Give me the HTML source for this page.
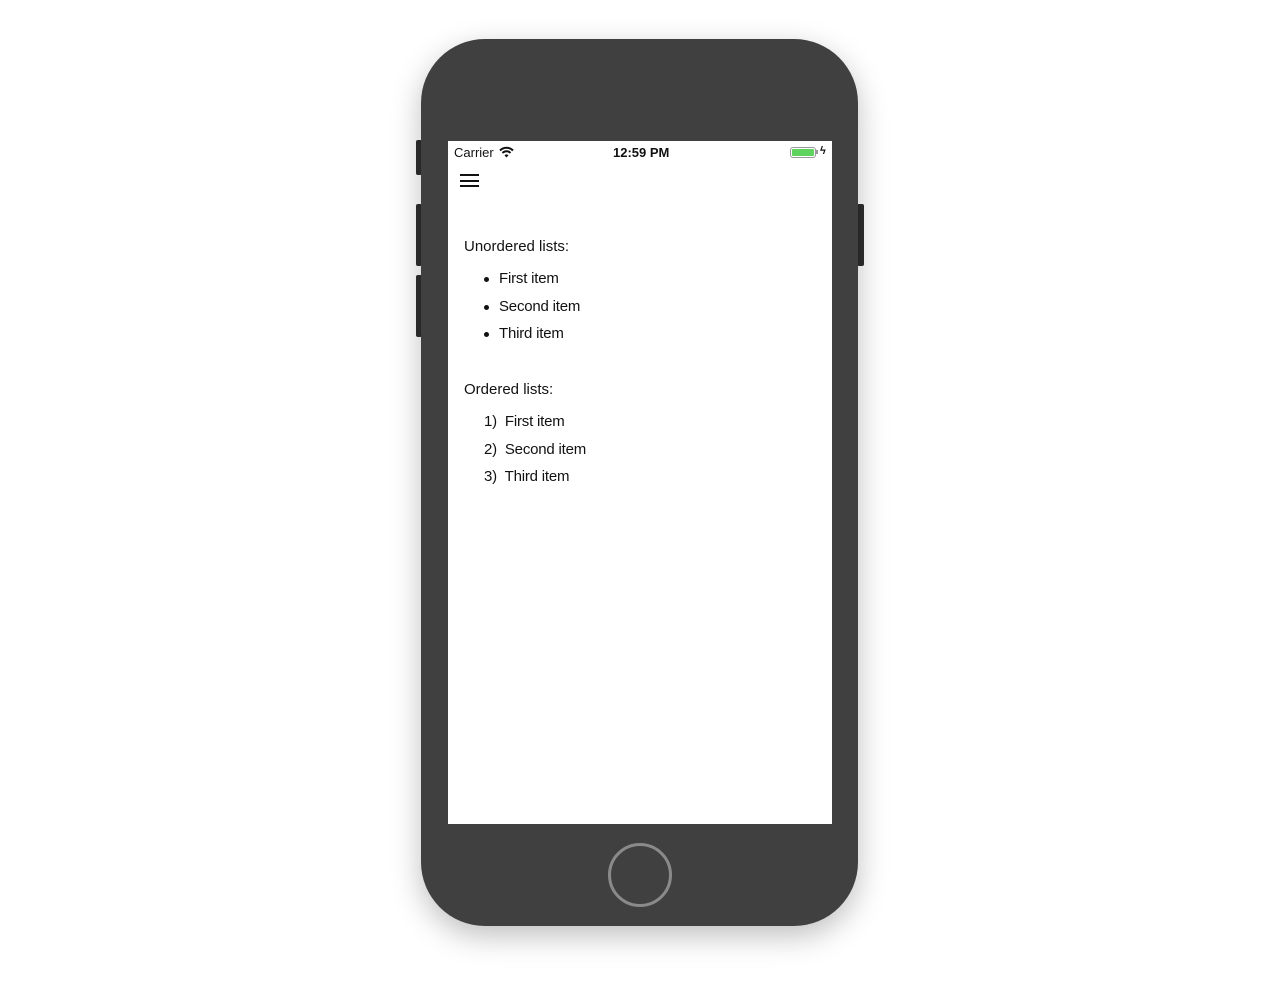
<!DOCTYPE html>
<html><head><style>
body{margin:0;width:1280px;height:984px;background:#fff;position:relative;font-family:"Liberation Sans",sans-serif;overflow:hidden}
.phone{position:absolute;left:421px;top:39px;width:437px;height:887px;background:#404040;border-radius:64px;box-shadow:0 10px 30px rgba(0,0,0,0.25)}
.btn{position:absolute;background:#2e2e2e;border-radius:2px}
.screen{position:absolute;left:448px;top:141px;width:384px;height:683px;background:#fff}
.t{position:absolute;font-size:15px;color:#111;white-space:nowrap}
.home{position:absolute;left:608px;top:843px;width:58px;height:58px;border:3px solid #8a8a8a;border-radius:50%}
.bar{position:absolute;left:12px;width:19px;height:2.4px;background:#111}
.d{position:absolute;left:36px;width:5px;height:5px;border-radius:50%;background:#111}
</style></head><body>
<div class="btn" style="left:416px;top:140px;width:6px;height:35px"></div>
<div class="btn" style="left:416px;top:204px;width:6px;height:62px"></div>
<div class="btn" style="left:416px;top:275px;width:6px;height:62px"></div>
<div class="btn" style="left:857px;top:204px;width:7px;height:62px"></div>
<div class="phone"></div>
<div class="screen">
<div class="t" style="left:6px;top:4px;font-size:13px">Carrier</div>
<svg style="position:absolute;left:51px;top:5px" width="15" height="12" viewBox="0 0 15 12"><path d="M1 4.5a9 9 0 0 1 13 0" stroke="#111" stroke-width="2" fill="none"/><path d="M3.5 7a5.5 5.5 0 0 1 8 0" stroke="#111" stroke-width="2" fill="none"/><path d="M5.5 9.2L7.5 11.5L9.5 9.2a3 3 0 0 0-4 0z" fill="#111"/></svg>
<div class="t" style="left:165px;top:4px;font-size:13px;font-weight:bold">12:59 PM</div>
<div style="position:absolute;left:342px;top:6px;width:26px;height:11px;border:1px solid #999;border-radius:3px;box-sizing:border-box;padding:1px"><div style="width:100%;height:100%;background:#5ed35e;border-radius:1px"></div></div>
<div style="position:absolute;left:368px;top:9px;width:2px;height:4px;background:#999"></div>
<div class="t" style="left:372px;top:4px;font-size:11px;font-weight:bold">ϟ</div>
<div class="bar" style="top:33px"></div><div class="bar" style="top:38.5px"></div><div class="bar" style="top:44px"></div>
<div class="t" style="left:16px;top:97px">Unordered lists:</div>
<div class="d" style="top:136px"></div><div class="t" style="left:51px;top:129px;letter-spacing:-0.2px">First item</div>
<div class="d" style="top:164px"></div><div class="t" style="left:51px;top:157px;letter-spacing:-0.2px">Second item</div>
<div class="d" style="top:191px"></div><div class="t" style="left:51px;top:184px;letter-spacing:-0.2px">Third item</div>
<div class="t" style="left:16px;top:240px">Ordered lists:</div>
<div class="t" style="left:36px;top:272px;letter-spacing:-0.2px">1)&nbsp; First item</div>
<div class="t" style="left:36px;top:300px;letter-spacing:-0.2px">2)&nbsp; Second item</div>
<div class="t" style="left:36px;top:327px;letter-spacing:-0.2px">3)&nbsp; Third item</div>
</div>
<div class="home"></div>
</body></html>
